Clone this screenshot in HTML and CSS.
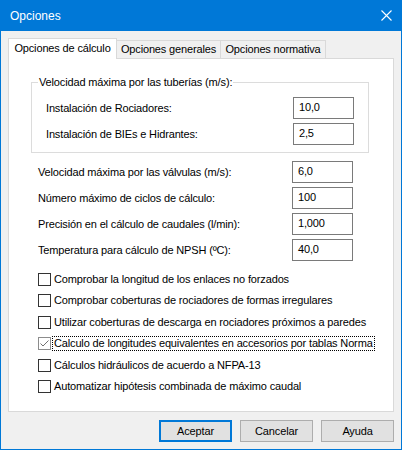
FILE: index.html
```html
<!DOCTYPE html>
<html lang="es">
<head>
<meta charset="utf-8">
<title>Opciones</title>
<link rel="stylesheet" href="styles.css">
</head>
<body>
<div class="window">
  <div class="titlebar">
    <span class="title">Opciones</span>
    <svg class="close" width="11" height="11" viewBox="0 0 11 11"><path d="M0.5 0.5 L10.5 10.5 M10.5 0.5 L0.5 10.5" stroke="#fff" stroke-width="1.1" fill="none"/></svg>
  </div>
  <div class="main">
    <div class="tabs">
      <div class="tab active t1">Opciones de cálculo</div>
      <div class="tab t2">Opciones generales</div>
      <div class="tab t3">Opciones normativa</div>
    </div>
    <div class="panel">
      <fieldset class="group">
        <legend>Velocidad máxima por las tuberías (m/s):</legend>
        <div class="rows">
          <div class="row"><span>Instalación de Rociadores:</span><div class="input">10,0</div></div>
          <div class="row"><span>Instalación de BIEs e Hidrantes:</span><div class="input">2,5</div></div>
        </div>
      </fieldset>
      <div class="rows fields">
        <div class="row"><span>Velocidad máxima por las válvulas (m/s):</span><div class="input">6,0</div></div>
        <div class="row"><span>Número máximo de ciclos de cálculo:</span><div class="input">100</div></div>
        <div class="row"><span>Precisión en el cálculo de caudales (l/min):</span><div class="input">1,000</div></div>
        <div class="row"><span>Temperatura para cálculo de NPSH (ºC):</span><div class="input">40,0</div></div>
      </div>
      <div class="checks">
        <div class="check"><div class="box"></div><span>Comprobar la longitud de los enlaces no forzados</span></div>
        <div class="check"><div class="box"></div><span>Comprobar coberturas de rociadores de formas irregulares</span></div>
        <div class="check"><div class="box"></div><span>Utilizar coberturas de descarga en rociadores próximos a paredes</span></div>
        <div class="check checked focused"><div class="box"><svg width="11" height="11" viewBox="0 0 11 11"><path d="M1.5 5.5 L4 8 L9.5 2.5" stroke="#707070" stroke-width="1" fill="none"/></svg></div><span>Calculo de longitudes equivalentes en accesorios por tablas Norma</span></div>
        <div class="check"><div class="box"></div><span>Cálculos hidráulicos de acuerdo a NFPA-13</span></div>
        <div class="check"><div class="box"></div><span>Automatizar hipótesis combinada de máximo caudal</span></div>
      </div>
    </div>
    <div class="buttons">
      <div class="btn default">Aceptar</div>
      <div class="btn">Cancelar</div>
      <div class="btn">Ayuda</div>
    </div>
  </div>
</div>
</body>
</html>
```
FILE: styles.css
```css
* { box-sizing: border-box; }
html, body { margin: 0; padding: 0; }
body {
  background: #f0f0f0;
  font-family: "Liberation Sans", Arial, sans-serif;
  font-size: 11px;
  letter-spacing: -0.15px;
  color: #000;
}
.window {
  width: 402px;
  height: 450px;
  border: 1px solid #0078d7;
  border-top: 0;
  display: flex;
  flex-direction: column;
  background: #f0f0f0;
}
.titlebar {
  height: 31px;
  flex: none;
  background: #0078d7;
  color: #fff;
  display: flex;
  align-items: center;
  justify-content: space-between;
  padding: 0 9px 0 9px;
  font-size: 12px;
  letter-spacing: 0;
}
.title { margin-top: 1px; }
.close { display: block; }
.main {
  flex: 1;
  padding: 7px 7px 0 7px;
  display: flex;
  flex-direction: column;
}
.tabs {
  display: flex;
  height: 20px;
  align-items: flex-end;
  position: relative;
  z-index: 1;
}
.tab {
  height: 18px;
  border: 1px solid #d9d9d9;
  border-bottom: 0;
  background: #f0f0f0;
  text-align: center;
  line-height: 17px;
  white-space: nowrap;
}
.tab.active {
  height: 21px;
  background: #fff;
  margin-bottom: -1px;
  line-height: 19px;
}
.t1 { width: 109px; }
.t2 { width: 104px; border-left: 0; }
.t3 { width: 105px; border-left: 0; }
.panel {
  width: 386px;
  height: 354px;
  flex: none;
  background: #fff;
  border: 1px solid #d9d9d9;
}
.group {
  margin: 16px 0 0 22px;
  width: 338px;
  border: 1px solid #dcdcdc;
  padding: 8px 14px 7px 14px;
}
.group legend {
  margin-left: -8px;
  padding: 0 1px;
  line-height: 14px;
}
.rows {
  display: flex;
  flex-direction: column;
  gap: 4px;
}
.row {
  display: flex;
  justify-content: space-between;
  align-items: center;
  height: 22px;
}
.input {
  width: 61px;
  height: 22px;
  border: 1px solid #7a7a7a;
  background: #fff;
  padding-left: 5px;
  line-height: 19px;
}
.fields {
  margin: 8px 40px 0 29px;
}
.checks {
  margin-top: 11px;
  padding-left: 29px;
  display: flex;
  flex-direction: column;
  gap: 6.4px;
}
.check {
  display: flex;
  align-items: center;
  height: 15px;
}
.box {
  width: 13px;
  height: 13px;
  border: 1px solid #333;
  background: #fff;
  margin-right: 1px;
  flex: none;
}
.box svg { display: block; }
.check.checked .box { border-color: #8c8c8c; }
.check span {
  border: 1px dotted transparent;
  padding: 0 1px;
  line-height: 13px;
  white-space: nowrap;
}
.check.focused span { border-color: #000; }
.buttons {
  margin-top: 8px;
  display: flex;
  justify-content: flex-end;
  gap: 8px;
}
.btn {
  width: 73px;
  height: 22px;
  border: 1px solid #adadad;
  background: #e1e1e1;
  display: flex;
  align-items: center;
  justify-content: center;
}
.btn.default { border: 2px solid #0078d7; }
```
